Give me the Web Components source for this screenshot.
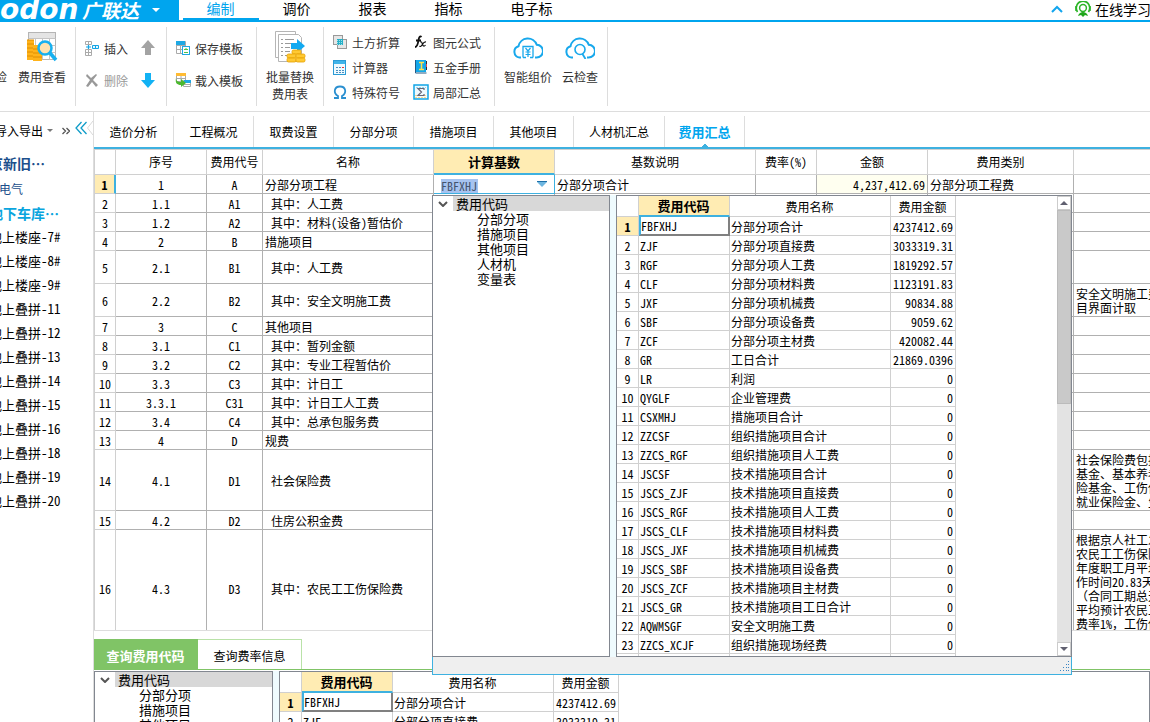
<!DOCTYPE html>
<html lang="zh-CN">
<head>
<meta charset="utf-8">
<meta name="viewport" content="width=device-width, initial-scale=1">
<title>广联达 - 费用汇总</title>
<style>
  html, body { margin: 0; height: 100%; overflow: hidden; background: #fff; }
  body {
    --cyan: #3eb1e0; --blue: #00a5ee; --sel: #ffecb3; --line: #b0b0b0; --soft: #d0d0d0; --frame: #828790; --green: #80c466;
    font: 12px/14px "Noto Sans CJK SC", "Liberation Sans", sans-serif; color: #000;
  }
</style>
</head>
<body>
<cost-app></cost-app>

<script>
const RESET = `*{box-sizing:border-box} button{font:inherit;color:inherit;background:none;border:0;padding:0;margin:0;white-space:nowrap} a{color:inherit;text-decoration:none} ul{list-style:none;margin:0;padding:0}`;

class Base extends HTMLElement {
  connectedCallback() {
    if (this.shadowRoot) return;
    const root = this.attachShadow({ mode: 'open' });
    root.innerHTML = `<style>${RESET}</style>` + this.view();
  }
}

/* ---------- icons ---------- */
const cloud = 'M8 22.500H6.500A5.800 5.800 0 0 1 5.500 11.200A9.500 9.500 0 0 1 23.800 9.800A6.300 6.300 0 0 1 23.500 22.500H22';
const coin = (x, y) => `<rect x="${x}" y="${y}" width="9" height="4" rx="1.500" fill="#ffc933" stroke="#e6a100" stroke-width=".8"/>`;
const ICONS = {
  feeview: [32, 32, `<rect x="2.500" y="1.500" width="27" height="27" fill="#fff" stroke="#b5b5b5"/><rect x="3" y="2" width="26" height="5" fill="#e4e4e4"/><path d="M2.500 7.500h27M2.500 14.500h27M2.500 21.500h27M9.500 7.500v21M16.500 7.500v21M23.500 7.500v21" stroke="#c4c4c4" fill="none"/><path d="M1 9h7v20H1zM7 14h9v16H7z" fill="#ffb31a"/><path d="M1 13h7M1 17h6M1 21h6M1 25h6M7 18h9M7 22h9M7 26h9M1 9h7" stroke="#e08e00" fill="none"/><circle cx="19" cy="17" r="6.500" fill="#ffe2b0" stroke="#17b0f0" stroke-width="2.500"/><path d="M24 22l6 7" stroke="#17b0f0" stroke-width="3.500"/>`],
  insert: [16, 16, `<path d="M1.500 1.500h6v3h-6zM4.500 1.500v3M1.500 9.500h6v6h-6zM4.500 9.500v6M1.500 12.500h6" fill="none" stroke="#aaa"/><path d="M2 7h5M4.500 5v4" stroke="#12a5e6" stroke-width="1.200" fill="none"/><path d="M8.500 5.500h6v3h-6zM11.500 5.500v3" fill="#e8f7ff" stroke="#12a5e6"/>`],
  del: [16, 16, `<path d="M3 2l4 4 5-4 1 1-4 5 5 5-2 2-4-5-4 5-2-1 4-6-4-4z" fill="#999"/>`],
  up: [16, 16, `<path d="M8 0l7 8h-4v7H5V8H1z" fill="#a3a3a3"/>`],
  down: [16, 16, `<path d="M8 16l7-8h-4V1H5v7H1z" fill="#12b2f4"/>`],
  save: [16, 16, `<path d="M1.500 1.500h9v12h-9zM1.500 5.500h9M1.500 9.500h9M5.500 3v11" fill="#fff" stroke="#aaa"/><path d="M1 1h9v4H1z" fill="#1fa9e4"/><rect x="7.500" y="6.500" width="7" height="8" fill="#fff" stroke="#1fa9e4"/><path d="M9 9.500h4M9 12.500h4M11 8v1.500" stroke="#4fc44a" fill="none"/>`],
  load: [16, 16, `<path d="M1.500 1.500h9v8h-9zM1.500 6.500h9M6 4v5" fill="#fff" stroke="#aaa"/><path d="M1 1h10v3H1z" fill="#ffbb33"/><path d="M8.500 8.500h7v6h-7zM8.500 12.500h7" fill="#fff" stroke="#aaa"/><path d="M9 8h7v3H9z" fill="#1fa9e4"/><path d="M1 6c0 3 2 4 5 4V7l5 4-5 4v-2c-4 0-6-2-5-7z" fill="#4bb82e"/>`],
  batch: [32, 34, `<path d="M1.500 1.500h20v26h-20z" fill="#fff" stroke="#b5b5b5"/><path d="M4.500 4.500h20l3 3v24h-23z" fill="#fff" stroke="#b5b5b5"/><path d="M7 9.500h2M7 13.500h2M7 17.500h2M7 21.500h2M7 25.500h2M11 9.500h9M11 13.500h7M11 17.500h5M11 21.500h5M11 25.500h2" stroke="#9a9a9a" fill="none"/><path d="M17 13h6V9l8 7-8 7v-4h-6z" fill="#12a9f0"/>${coin(18,20)}${coin(13,24)}${coin(22,24)}${coin(13,28)}${coin(22,28)}`],
  earth: [16, 16, `<rect x="1.500" y="1.500" width="9" height="9" fill="#e6e6e6" stroke="#999"/><rect x="5.500" y="5.500" width="9" height="9" fill="#e6e6e6" stroke="#999"/><path d="M5 5h6v6H5z" fill="#27b0c8"/><path d="M5 6.500h6M5 8.500h6M5 10.500h6" stroke="#9fe2ea" stroke-dasharray="1 1"/>`],
  calc: [16, 16, `<rect x="1.500" y="1.500" width="12" height="14" fill="#eefaff" stroke="#2a9bd6"/><path d="M2 2h11v3H2z" fill="#3fb4ea"/><path d="M4 8.500h2M7 8.500h2M4 11.500h2M7 11.500h2M10 11.500h2M4 13.500h2M7 13.500h2M10 13.500h2" stroke="#4b8fc0"/><path d="M10 8.500h2" stroke="#e33"/>`],
  omega: [16, 16, `<path d="M2 14h4v-2C1 9 2 2.500 8 2.500S15 9 10 12v2h4" fill="none" stroke="#2a8fd0" stroke-width="1.800"/>`],
  fx: [16, 16, `<path d="M8.500 3C7 1.500 6 3 5.500 6S4.500 13 2 13M3 6.500h5" fill="none" stroke="#111" stroke-width="1.800"/><path d="M7 8c2-1 2 1 2.500 2.500S11 13 12.500 11M13 8c-2-.5-3 1.500-4 3S7.500 13 6.500 12" fill="none" stroke="#111" stroke-width="1.200"/>`],
  book: [16, 16, `<path d="M2 1h11v12H2z" fill="#13a8ea"/><path d="M2.500 1v13h11" fill="none" stroke="#235b86"/><path d="M6 3.500h5M8.500 3.500v7M6 10.500h5" stroke="#ffe14d" stroke-width="1.500" fill="none"/><path d="M13.500 2v3M13.500 8v3" stroke="#333"/><path d="M13.500 5v3" stroke="#e44"/>`],
  sum: [16, 16, `<rect x="1" y="1" width="14" height="14" fill="#eefaff" stroke="#12a5e6" stroke-width="1.500"/><path d="M2 11.500h12M2 13.500h12" stroke="#ffd98a" stroke-dasharray="2 1"/><path d="M3 3.500h10" stroke="#8dd4f2" stroke-dasharray="2 1"/><path d="M11 6V4.500H5l3.500 3.500L5 11.500h6V10" fill="none" stroke="#667" stroke-width="1.200"/>`],
  cloudfee: [30, 24, `<path d="${cloud}" fill="none" stroke="#18a8ec" stroke-width="2"/><path d="M10 22.500V11.500h10v11M10 22.500h3M17 22.500h3" fill="none" stroke="#18a8ec" stroke-width="1.300"/><path d="M12.500 13l2.500 3 2.500-3M15 16v6M12.500 17h5M12.500 19.500h5" fill="none" stroke="#18a8ec" stroke-width="1.200"/>`],
  cloudfind: [30, 24, `<path d="${cloud}" fill="none" stroke="#18a8ec" stroke-width="2"/><circle cx="15" cy="14.500" r="5" fill="#fff" stroke="#18a8ec" stroke-width="1.600"/><path d="M17.500 19l3 5" stroke="#18a8ec" stroke-width="1.800"/>`],
  service: [16, 16, `<path d="M2.500 11A6.800 6.800 0 1 1 13.500 11" fill="none" stroke="#2db528" stroke-width="1.800"/><path d="M1 5v5M15 5v5" stroke="#2db528" stroke-width="1.500"/><circle cx="8" cy="7" r="3.400" fill="#fff" stroke="#2db528" stroke-width="1.500"/><path d="M3 15c1-3 3-4 5-4s4 1 5 4l-3-1-2 2-2-2z" fill="#1fa61b"/>`],
  caretup: [12, 8, `<path d="M1 7l5-5 5 5" fill="none" stroke="#12a5ee" stroke-width="2"/>`],
  caret: [8, 8, `<path d="M0 2h8L4 6z" fill="currentColor"/>`],
  minicaret: [6, 4, `<path d="M0 0h6L3 3z" fill="#777"/>`],
  more: [8, 8, `<path d="M.5 1l3 3-3 3M4.500 1l3 3-3 3" fill="none" stroke="#555" stroke-width="1.300"/>`],
  fold: [12, 14, `<path d="M6.500 1L1 7l5.500 6M11.500 1L6 7l5.500 6" fill="none" stroke="#0f9cc8" stroke-width="1.300"/>`],
  open: [10, 6, `<path d="M1 1l4 4 4-4" fill="none" stroke="#555" stroke-width="2"/>`],
  combo: [10, 6, `<path d="M0 0h10v1L5 6 0 1z" fill="#6db6e0"/><path d="M0 .5h10" stroke="#1d6fa8"/>`],
  grip: [12, 12, `<path d="M10 1.500h1M8 4.500h1M10 4.500h1M5 7.500h1M8 7.500h1M10 7.500h1M2 10.500h1M5 10.500h1M8 10.500h1M10 10.500h1" stroke="#3b86c4"/>`],
  notch: [6, 14, `<path d="M6 0L0.500 7L6 14" fill="#fff" stroke="#d8d8d8"/>`]
};
class AppIcon extends Base {
  view() {
    const [w, h, body] = ICONS[this.getAttribute('name')];
    return `<style>:host{display:block;flex:none;line-height:0}</style><svg width="${w}" height="${h}" viewBox="0 0 ${w} ${h}" aria-hidden="true">${body}</svg>`;
  }
}
customElements.define('app-icon', AppIcon);

/* ---------- title bar ---------- */
class AppHeader extends Base {
  view() {
    return `<style>
      :host{display:flex;height:22px;border-bottom:2px solid var(--blue);font-size:14px;line-height:16px}
      .brand{width:179px;height:22px;background:var(--blue);color:#fff;display:flex;align-items:center;overflow:hidden;flex:none;padding-bottom:2px}
      .brand b{font:italic bold 28px/22px "DejaVu Sans",sans-serif;width:82px}
      .brand i{font-size:19px;line-height:20px;font-weight:bold;width:70px}
      nav{display:flex;padding-left:4px}
      a{width:76px;height:20px;text-align:center;padding-right:1px}
      a[aria-current]{color:var(--blue);border-bottom:2px solid var(--blue)}
      nav a:last-child{width:90px}
      .right{margin-left:auto;display:flex;align-items:center;gap:4px;height:18px}
      .right app-icon:first-child{margin-right:8px}
      .learn{width:55px;overflow:hidden;white-space:nowrap;height:18px;line-height:18px}
    </style>
    <div class="brand"><b>odon</b><i>广联达</i><app-icon name="caret"></app-icon></div>
    <nav><a href="#" aria-current="page">编制</a><a href="#">调价</a><a href="#">报表</a><a href="#">指标</a><a href="#">电子标</a></nav>
    <div class="right"><app-icon name="caretup"></app-icon><app-icon name="service"></app-icon><a class="learn" href="#">在线学习</a></div>`;
  }
}
customElements.define('app-header', AppHeader);

/* ---------- ribbon ---------- */
class RibbonButton extends Base {
  view() {
    const tall = this.hasAttribute('tall');
    return `<style>
      :host{display:block}
      button{display:flex;align-items:center;gap:4px;height:18px;line-height:17px;color:#333}
      button.tall{flex-direction:column;height:auto;gap:5px;text-align:center}
      button:disabled{color:#999}
      .pic{display:flex;align-items:center;justify-content:center}
      .tall .pic{height:32px}
    </style><button class="${tall ? 'tall' : ''}" ${this.hasAttribute('off') ? 'disabled' : ''} ${this.getAttribute('label') ? `aria-label="${this.getAttribute('label')}"` : ''}>
      ${this.getAttribute('icon') ? `<span class="pic"><app-icon name="${this.getAttribute('icon')}"></app-icon></span>` : '<span class="pic"></span>'}<span><slot></slot></span></button>`;
  }
}
customElements.define('ribbon-button', RibbonButton);

class AppRibbon extends Base {
  view() {
    return `<style>
      :host{display:flex;height:90px;padding-top:5px;border-bottom:1px solid #ddd}
      section{height:79px;border-right:1px solid #ddd;display:flex;padding-top:4px}
      .edge{margin-left:-5px;margin-right:11px}
      .two{display:grid;grid-template-columns:auto auto;row-gap:14px;align-content:start;padding-top:12px}
      .three{display:grid;grid-template-columns:auto auto;row-gap:7px;column-gap:13px;align-content:start;justify-content:start;padding-top:6px}
      .a{padding-right:9px}.b{padding-left:8px;padding-right:6px;column-gap:12px;width:91px}.c{padding-left:8px;width:90px}
      .d{padding:4px 9px 0;width:67px}.e{width:171px;padding-left:8px}.f{padding-left:9px;padding-right:9px;gap:10px}
    </style>
    <section class="a"><ribbon-button tall class="edge">检</ribbon-button><ribbon-button tall icon="feeview">费用查看</ribbon-button></section>
    <section class="two b"><ribbon-button icon="insert">插入</ribbon-button><ribbon-button icon="up" label="上移"></ribbon-button><ribbon-button icon="del" off>删除</ribbon-button><ribbon-button icon="down" label="下移"></ribbon-button></section>
    <section class="two c"><ribbon-button icon="save">保存模板</ribbon-button><span></span><ribbon-button icon="load">载入模板</ribbon-button></section>
    <section class="d"><ribbon-button tall icon="batch">批量替换<br>费用表</ribbon-button></section>
    <section class="three e"><ribbon-button icon="earth">土方折算</ribbon-button><ribbon-button icon="fx">图元公式</ribbon-button><ribbon-button icon="calc">计算器</ribbon-button><ribbon-button icon="book">五金手册</ribbon-button><ribbon-button icon="omega">特殊符号</ribbon-button><ribbon-button icon="sum">局部汇总</ribbon-button></section>
    <section class="f"><ribbon-button tall icon="cloudfee">智能组价</ribbon-button><ribbon-button tall icon="cloudfind">云检查</ribbon-button></section>`;
  }
}
customElements.define('app-ribbon', AppRibbon);

/* ---------- project list ---------- */
class ProjectTree extends Base {
  view() {
    const rows = ['地上楼座-7#', '地上楼座-8#', '地上楼座-9#', '地上叠拼-11', '地上叠拼-12', '地上叠拼-13', '地上叠拼-14', '地上叠拼-15', '地上叠拼-16', '地上叠拼-18', '地上叠拼-19', '地上叠拼-20'];
    return `<style>
      :host{display:block;border-right:1px solid #ddd;overflow:hidden;font-size:13px;line-height:24px;font-feature-settings:"hwid"}
      .bar{display:flex;align-items:center;height:37px;margin-left:-5px;font-size:12px}
      .bar button{display:flex;align-items:center;gap:4px;flex:none}
      .more{margin-left:9px}.fold{margin-left:5px;padding-bottom:6px}.notch{margin-left:auto;padding-bottom:6px}
      ul{margin-left:-11px;white-space:nowrap}
      .p{font-weight:bold;font-size:14px;color:#1c4f8c;height:28px;line-height:28px}
      .s{color:#1c4f8c;padding-left:10px;font-size:12px}
      .on{font-weight:bold;font-size:14px;color:#0aa5de}
    </style>
    <div class="bar"><button>导入导出<app-icon name="minicaret"></app-icon></button><button class="more" aria-label="更多"><app-icon name="more"></app-icon></button><button class="fold" aria-label="收起"><app-icon name="fold"></app-icon></button><app-icon class="notch" name="notch"></app-icon></div>
    <ul><li class="p">京新旧…</li><li class="s">电气</li><li class="on">地下车库…</li>${rows.map(r => `<li>${r}</li>`).join('')}</ul>`;
  }
}
customElements.define('project-tree', ProjectTree);

/* ---------- page tabs ---------- */
class PageTabs extends Base {
  view() {
    const t = ['造价分析', '工程概况', '取费设置', '分部分项', '措施项目', '其他项目', '人材机汇总', '费用汇总'];
    return `<style>
      :host{display:flex;height:37px;padding-top:4px;border-bottom:2px solid var(--cyan)}
      button{min-width:80px;padding:0 15px;border-right:1px solid #ddd}
      button[aria-selected=true]{font-weight:bold;font-size:13px;color:var(--blue);padding:0 13px;
        background:conic-gradient(from 135deg at 50% 0,var(--cyan) 90deg,transparent 0) center bottom/8px 4px no-repeat}
    </style>${t.map((x, i) => `<button role="tab" aria-selected="${i === 7}">${x}</button>`).join('')}`;
  }
}
customElements.define('page-tabs', PageTabs);

/* ---------- code tree + code table ---------- */
const GROUPS = ['分部分项', '措施项目', '其他项目', '人材机', '变量表'];
const CODES = [['FBFXHJ', '分部分项合计', '4237412.69'], ['ZJF', '分部分项直接费', '3033319.31'], ['RGF', '分部分项人工费', '1819292.57'], ['CLF', '分部分项材料费', '1123191.83'], ['JXF', '分部分项机械费', '90834.88'], ['SBF', '分部分项设备费', '9059.62'], ['ZCF', '分部分项主材费', '420082.44'], ['GR', '工日合计', '21869.0396'], ['LR', '利润'], ['QYGLF', '企业管理费'], ['CSXMHJ', '措施项目合计'], ['ZZCSF', '组织措施项目合计'], ['ZZCS_RGF', '组织措施项目人工费'], ['JSCSF', '技术措施项目合计'], ['JSCS_ZJF', '技术措施项目直接费'], ['JSCS_RGF', '技术措施项目人工费'], ['JSCS_CLF', '技术措施项目材料费'], ['JSCS_JXF', '技术措施项目机械费'], ['JSCS_SBF', '技术措施项目设备费'], ['JSCS_ZCF', '技术措施项目主材费'], ['JSCS_GR', '技术措施项目工日合计'], ['AQWMSGF', '安全文明施工费'], ['ZZCS_XCJF', '组织措施现场经费']];
class CodeBrowser extends Base {
  view() {
    const n = +this.getAttribute('rows') || CODES.length;
    const g = +this.getAttribute('groups') || GROUPS.length;
    const scroll = this.hasAttribute('scroll');
    return `<style>
      :host{display:flex;min-height:0;background:#effbfe;gap:6px;font-feature-settings:"hwid"}
      .tree{width:var(--tree,178px);flex:none;background:#fff;border:1px solid var(--frame);font-size:13px;line-height:15px;overflow:hidden}
      .root{display:flex;align-items:center}
      .root app-icon{width:20px;padding-left:5px}
      .root span{flex:1;background:#d8d8d8;padding-left:3px}
      .tree ul{padding-left:44px}
      .grid{flex:1;min-width:0;background:#fff;border:1px solid var(--frame);display:flex;justify-content:space-between;overflow:hidden}
      table{border-collapse:separate;border-spacing:0;table-layout:fixed;width:339px;flex:none;height:min-content}
      td,th{border:solid var(--soft);border-width:0 1px 1px 0;padding:1px 2px 0 1px;height:19px;font-weight:normal;overflow:hidden;white-space:nowrap}
      thead th{height:21px}
      .g{text-align:center;padding:1px 0 0}
      td:last-child{text-align:right}
      thead .on{background:var(--sel);font-weight:bold;font-size:13px;border-bottom:2px solid var(--cyan)}
      .g.on{background:var(--sel);font-weight:bold}
      td.on{padding:1px 0 0;border-left:2px solid var(--cyan);border-right:2px solid #808080;border-bottom:2px solid #808080}
      .tail td,.tail th{height:3px;padding:0;border-bottom:0;line-height:0}
      .bar{width:14px;background:#e3e3e3;display:flex;flex-direction:column}
      .bar button{height:14px;background:#fff;border:1px solid #ccc;display:flex;align-items:center;justify-content:center;color:#606070}
      .bar .up app-icon{transform:rotate(180deg)}
      .thumb{height:194px;background:#c9c9c9;border:1px solid #bbb;margin-bottom:auto}
    </style>
    <div class="tree"><div class="root"><app-icon name="open"></app-icon><span>费用代码</span></div><ul>${GROUPS.slice(0, g).map(x => `<li>${x}</li>`).join('')}</ul></div>
    <div class="grid"><table><colgroup><col style="width:22px"><col style="width:91px"><col style="width:161px"><col style="width:65px"></colgroup>
      <thead><tr><th class="g"></th><th class="on" scope="col">费用代码</th><th scope="col">费用名称</th><th scope="col">费用金额</th></tr></thead>
      <tbody>${CODES.slice(0, n).map((c, i) => `<tr><th scope="row" class="g${i ? '' : ' on'}">${i + 1}</th><td${i ? '' : ' class="on"'}>${c[0]}</td><td>${c[1]}</td><td>${c[2] || '0'}</td></tr>`).join('')}${scroll ? '<tr class="tail"><th></th><td></td><td></td><td></td></tr>' : ''}</tbody></table>
      ${scroll ? '<div class="bar"><button class="up" aria-label="向上"><app-icon name="caret"></app-icon></button><div class="thumb"></div><button aria-label="向下"><app-icon name="caret"></app-icon></button></div>' : ''}</div>`;
  }
}
customElements.define('code-browser', CodeBrowser);

/* ---------- drop-down editor ---------- */
class ComboEditor extends Base {
  view() {
    return `<style>
      :host{display:block;position:relative;height:18px}
      .field{display:flex;align-items:center;justify-content:space-between;height:18px;padding:0 7px}
      input{font:inherit;font-feature-settings:inherit;width:37px;height:14px;margin-top:4px;padding:0;border:0;outline:0;border-radius:0;background:#a6c3f0;color:#44546e}
      .pop{position:absolute;z-index:5;left:-2px;top:20px;width:640px;height:480px;display:flex;flex-direction:column;background:#efefef;border-bottom:1px solid var(--cyan)}
      code-browser{height:462px}
      .foot{flex:1;display:flex;justify-content:flex-end;align-items:center;border:solid var(--cyan);border-width:0 1px;padding-right:1px}
    </style>
    <div class="field"><input value="FBFXHJ" aria-label="计算基数"><button aria-label="展开"><app-icon name="combo"></app-icon></button></div>
    <div class="pop"><code-browser scroll></code-browser><div class="foot"><app-icon name="grip"></app-icon></div></div>`;
  }
}
customElements.define('combo-editor', ComboEditor);

/* ---------- cost summary table ---------- */
const ROWS = [['1', 'A', '分部分项工程'], ['1.1', 'A1', ' 其中：人工费'], ['1.2', 'A2', ' 其中：材料(设备)暂估价'], ['2', 'B', '措施项目'], ['2.1', 'B1', ' 其中：人工费', 33], ['2.2', 'B2', ' 其中：安全文明施工费', 33, '安全文明施工费<br>目界面计取'], ['3', 'C', '其他项目'], ['3.1', 'C1', ' 其中：暂列金额'], ['3.2', 'C2', ' 其中：专业工程暂估价'], ['3.3', 'C3', ' 其中：计日工'], ['3.3.1', 'C31', ' 其中：计日工人工费'], ['3.4', 'C4', ' 其中：总承包服务费'], ['4', 'D', '规费'], ['4.1', 'D1', ' 社会保险费', 61, '社会保险费包括<br>基金、基本养老<br>险基金、工伤保<br>就业保险金、生'], ['4.2', 'D2', ' 住房公积金费'], ['4.3', 'D3', ' 其中：农民工工伤保险费', 118, '根据京人社工发<br>农民工工伤保险<br>年度职工月平均<br>作时间20.83天<br><span class="full">（合同工期总天</span><br>平均预计农民工<br>费率1%<span class="full">，</span>工伤保']];
class CostTable extends Base {
  view() {
    const widths = [22, 91, 56, 171, 121, 201, 61, 111, 146];
    const heads = ['', '序号', '费用代号', '名称', '计算基数', '基数说明', '费率(%)', '金额', '费用类别', ''];
    return `<style>
      :host{display:block;border-top:1px solid var(--soft);font-feature-settings:"hwid"}
      table{border-collapse:separate;border-spacing:0;table-layout:fixed;width:100%}
      td,th{border:solid var(--line);border-width:0 1px 1px 0;padding:1px 2px 0;height:19px;font-weight:normal;white-space:nowrap;overflow:hidden}
      thead th{height:25px;border-color:var(--soft);padding-top:0}
      .g{border-color:var(--soft);border-left:1px solid var(--soft);padding:1px 0 0}
      .c{text-align:center}.in{padding-left:8px}
      .full{font-feature-settings:normal}
      .h33{height:33px}.h61{height:61px}.h118{height:118px}
      .h118~td:last-child{vertical-align:top;padding-top:3px}
      thead .on{background:var(--sel);font-weight:bold;font-size:13px;border-bottom:2px solid var(--cyan)}
      .g.on{background:var(--sel);font-weight:bold;border-right:2px solid var(--cyan)}
      .edit{overflow:visible;padding:0;border-color:var(--cyan)}
      .num{text-align:right;background:#fffff0}
      td:last-child,th:last-child{border-right:0}
    </style>
    <table><colgroup>${widths.map(w => `<col style="width:${w}px">`).join('')}<col></colgroup>
    <thead><tr>${heads.map((h, i) => `<th scope="col" class="${i ? '' : 'g'}${i === 4 ? 'on' : ''}">${h}</th>`).join('')}</tr></thead>
    <tbody>${ROWS.map((r, i) => `<tr><th scope="row" class="g ${i ? '' : 'on'} ${r[3] ? 'h' + r[3] : ''}">${i + 1}</th><td class="c">${r[0]}</td><td class="c">${r[1]}</td><td class="${r[2][0] === ' ' ? 'in' : ''}">${r[2].trim()}</td>${i ? '<td></td><td></td><td></td><td></td><td></td>' : '<td class="edit"><combo-editor></combo-editor></td><td>分部分项合计</td><td></td><td class="num">4,237,412.69</td><td>分部分项工程费</td>'}<td>${r[4] || ''}</td></tr>`).join('')}</tbody></table>`;
  }
}
customElements.define('cost-table', CostTable);

/* ---------- lower query panel ---------- */
class QueryPanel extends Base {
  view() {
    return `<style>
      :host{display:flex;flex-direction:column;position:relative;z-index:1;background:#fff;border-top:1px solid #ddd;padding-top:8px;--tree:179px}
      .tabs{display:flex;height:31px;border-bottom:1px solid var(--green);margin-bottom:1px;flex:none}
      button{width:104px;border:solid #b9e2a8;border-width:1px 1px 0 0;padding-top:3px}
      button[aria-selected=true]{background:var(--green);border-color:var(--green);color:#fff;font-weight:bold;font-size:13px}
      code-browser{flex:none;height:62px}
    </style>
    <div class="tabs"><button role="tab" aria-selected="true">查询费用代码</button><button role="tab" aria-selected="false">查询费率信息</button></div>
    <code-browser rows="2" groups="3"></code-browser>`;
  }
}
customElements.define('query-panel', QueryPanel);

class CostApp extends Base {
  view() {
    return `<style>
      :host{display:flex;flex-direction:column;height:100vh;overflow:hidden}
      .work{flex:1;display:flex;min-height:0}
      project-tree{width:94px;flex:none}
      main{flex:1;min-width:0;display:flex;flex-direction:column}
      cost-table{flex:1;min-height:0}
      query-panel{flex:0 0 92px;min-height:0}
      app-header,app-ribbon,page-tabs{flex:none}
      app-ribbon,page-tabs,query-panel,project-tree,app-header{box-sizing:border-box}
    </style>
    <app-header></app-header><app-ribbon></app-ribbon>
    <div class="work"><project-tree></project-tree><main><page-tabs></page-tabs><cost-table></cost-table><query-panel></query-panel></main></div>`;
  }
}
customElements.define('cost-app', CostApp);
</script>
</body>
</html>
